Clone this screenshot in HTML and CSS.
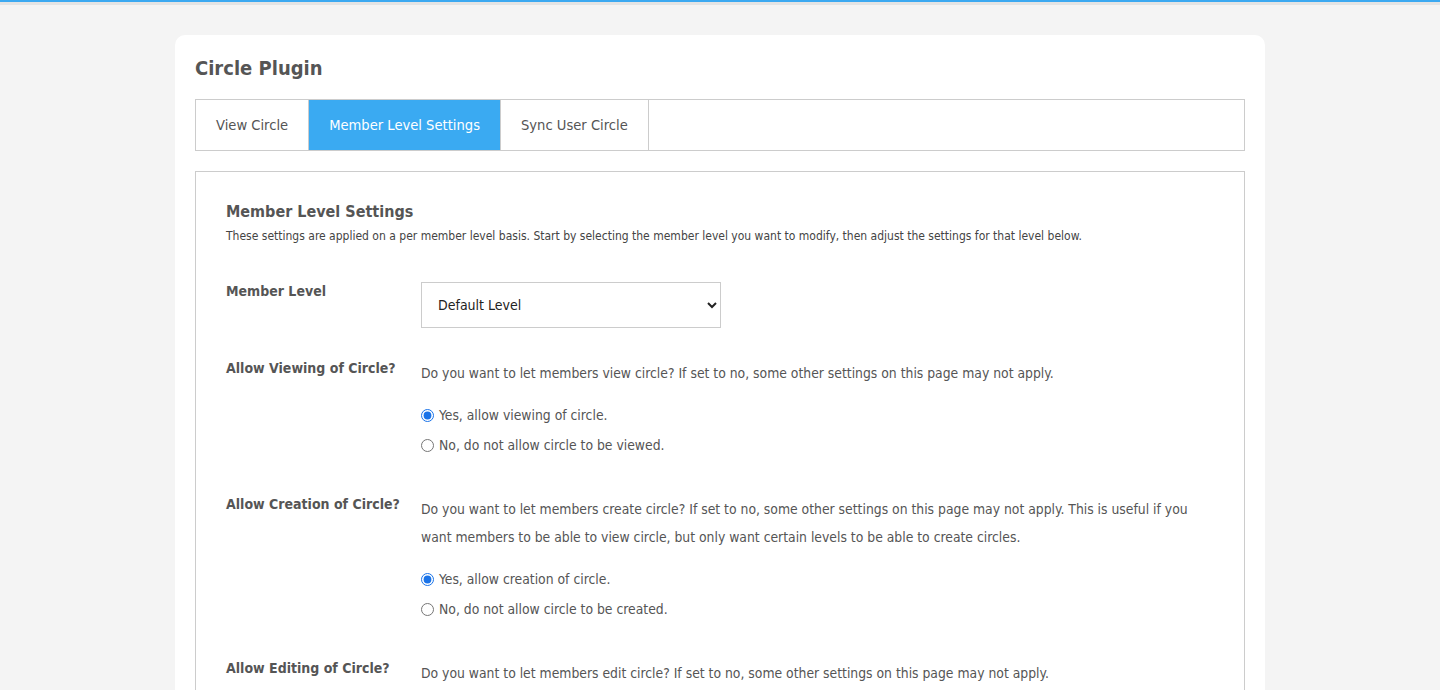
FILE: index.html
```html
<!DOCTYPE html>
<html>
<head>
<meta charset="utf-8">
<link rel="stylesheet" href="styles.css">
</head>
<body>
<div class="topbar"></div>
<div class="page">
  <div class="card">
    <h1 class="title">Circle Plugin</h1>
    <div class="tabs">
      <div class="tab">View Circle</div>
      <div class="tab active">Member Level Settings</div>
      <div class="tab">Sync User Circle</div>
    </div>
    <div class="panel">
      <h2 class="heading">Member Level Settings</h2>
      <p class="intro">These settings are applied on a per member level basis. Start by selecting the member level you want to modify, then adjust the settings for that level below.</p>

      <div class="row row-select">
        <div class="label">Member Level</div>
        <div class="field">
          <select class="select"><option>Default Level</option></select>
        </div>
      </div>

      <div class="row">
        <div class="label">Allow Viewing of Circle?</div>
        <div class="field">
          <p class="desc">Do you want to let members view circle? If set to no, some other settings on this page may not apply.</p>
          <div class="radios">
            <label class="radio"><input type="radio" name="view" checked> Yes, allow viewing of circle.</label>
            <label class="radio"><input type="radio" name="view"> No, do not allow circle to be viewed.</label>
          </div>
        </div>
      </div>

      <div class="row">
        <div class="label">Allow Creation of Circle?</div>
        <div class="field">
          <p class="desc">Do you want to let members create circle? If set to no, some other settings on this page may not apply. This is useful if you want members to be able to view circle, but only want certain levels to be able to create circles.</p>
          <div class="radios">
            <label class="radio"><input type="radio" name="create" checked> Yes, allow creation of circle.</label>
            <label class="radio"><input type="radio" name="create"> No, do not allow circle to be created.</label>
          </div>
        </div>
      </div>

      <div class="row">
        <div class="label">Allow Editing of Circle?</div>
        <div class="field">
          <p class="desc">Do you want to let members edit circle? If set to no, some other settings on this page may not apply.</p>
        </div>
      </div>
    </div>
  </div>
</div>
</body>
</html>
```
FILE: styles.css
```css
* { box-sizing: border-box; }
html, body { margin: 0; padding: 0; }
body {
  background: #f4f4f4;
  font-family: "DejaVu Sans Condensed", "Liberation Sans", sans-serif;
  color: #555;
  overflow: hidden;
}
.topbar {
  height: 5px;
  border-top: 2px solid #3ba9f1;
  background: #e4e4e4;
}
.page {
  padding-top: 30px;
  display: flex;
  justify-content: center;
}
.card {
  width: 1090px;
  background: #fff;
  border-radius: 10px;
  padding: 21px 20px 40px;
}
.title {
  margin: 0;
  font-size: 20px;
  line-height: 24px;
  font-weight: bold;
  color: #555;
}
.tabs {
  margin-top: 19px;
  display: flex;
  border: 1px solid #ccc;
  height: 52px;
}
.tab {
  padding: 0 20px;
  font-size: 14.6px;
  line-height: 50px;
  color: #555;
  border-right: 1px solid #ccc;
}
.tab.active {
  background: #3aaaf2;
  color: #fff;
}
.panel {
  margin-top: 20px;
  border: 1px solid #ccc;
  padding: 30px 30px 60px;
}
.heading {
  margin: 0;
  font-size: 16px;
  line-height: 20px;
  font-weight: bold;
  color: #555;
}
.intro {
  margin: 6px 0 0;
  font-size: 12px;
  line-height: 16px;
  color: #444;
}
.row {
  display: grid;
  grid-template-columns: 195px 1fr;
  margin-top: 35px;
}
.row-select {
  margin-top: 38px;
}
.row-select + .row { margin-top: 31px; }
.label {
  font-size: 14px;
  line-height: 18px;
  font-weight: bold;
  color: #555;
}
.select {
  width: 300px;
  height: 46px;
  border: 1px solid #ccc;
  border-radius: 0;
  background: #fff;
  padding: 0 12px;
  font-family: inherit;
  font-size: 14px;
  color: #222;
}
.desc {
  margin: 0;
  font-size: 13.8px;
  line-height: 28px;
  color: #555;
  max-width: 790px;
}
.radios {
  margin-top: 13px;
  display: flex;
  flex-direction: column;
}
.radio {
  height: 30px;
  display: flex;
  align-items: center;
  gap: 5px;
  font-size: 13.8px;
  color: #555;
}
.radio input {
  margin: 0;
  width: 13px;
  height: 13px;
  accent-color: #1a73e8;
}
```
